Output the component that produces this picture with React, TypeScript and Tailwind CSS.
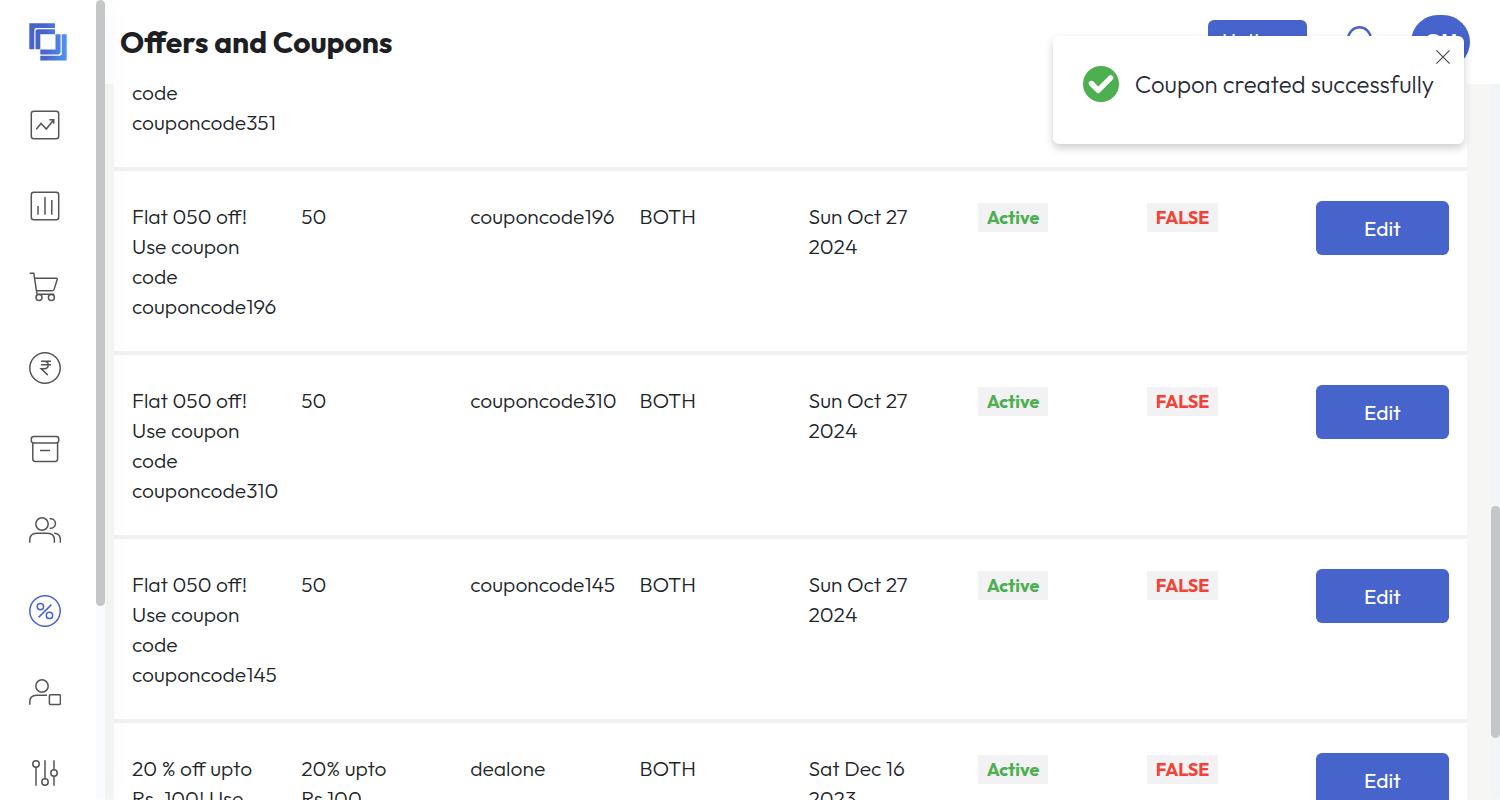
import type { ReactNode } from "react";

type Coupon = {
  title: string;
  discount: string;
  code: string;
  kind: string;
  expiry: string;
};

const flat = (n: string): Coupon => ({
  title: `Flat 050 off! Use coupon code couponcode${n}`,
  discount: "50",
  code: `couponcode${n}`,
  kind: "BOTH",
  expiry: "Sun Oct 27 2024",
});

const coupons: Coupon[] = [
  flat("351"),
  flat("196"),
  flat("310"),
  flat("145"),
  {
    title: "20 % off upto Rs. 100! Use coupon code dealone",
    discount: "20% upto Rs.100",
    code: "dealone",
    kind: "BOTH",
    expiry: "Sat Dec 16 2023",
  },
];

const navItems: { label: string; active?: boolean; icon: ReactNode }[] = [
  {
    label: "Dashboard",
    icon: (
      <>
        <rect x="2.3" y="2.3" width="27.4" height="27.4" rx="2.5" />
        <path d="M7.3 20.3 12 14.5l5.3 5.5 7.2-9M20.3 10.7h4.4v4" />
      </>
    ),
  },
  {
    label: "Reports",
    icon: (
      <>
        <rect x="2.3" y="2.3" width="27.4" height="27.4" rx="2.5" />
        <path d="M9 16v8.7M16 7v17.7M22.8 10v14.7" />
      </>
    ),
  },
  {
    label: "Orders",
    icon: (
      <>
        <path d="M.7 2.3h4.1L8 23.3h17.3M5.7 7.3h21.6q1.3 0 .9 1.2l-3 9.6q-.5 1.6-2 1.6H7.4" />
        <circle cx="10" cy="26.5" r="3" />
        <circle cx="22.4" cy="26.5" r="3" />
      </>
    ),
  },
  {
    label: "Payments",
    icon: (
      <>
        <circle cx="16" cy="16" r="15.2" />
        <path d="M12 9.2h10M12 12.8h10M12 9.2h3.2q4 0 4 3.7t-4 3.8h-3l6.6 6.4" />
      </>
    ),
  },
  {
    label: "Inventory",
    icon: (
      <>
        <rect x="2.3" y="3.6" width="27.4" height="6.4" rx="2.4" />
        <path d="M3.8 10v16q0 2.4 2.4 2.4h20q2.4 0 2.4-2.4V10M11 17.4h10" />
      </>
    ),
  },
  {
    label: "Customers",
    icon: (
      <>
        <circle cx="13" cy="10" r="6.2" />
        <path d="M.8 28.7V26q0-6.8 6.8-6.8h11q6.8 0 6.8 6.8v2.7M20.7 4.8a4.8 4.8 0 1 1 0 9.4M25.2 19.2q6.2.2 6.2 6.8v2.7" />
      </>
    ),
  },
  {
    label: "Offers",
    active: true,
    icon: (
      <>
        <circle cx="16" cy="16" r="15.2" />
        <circle cx="11.4" cy="11.6" r="3.2" />
        <circle cx="20.5" cy="20.4" r="3.2" />
        <path d="M9.6 22.4 22.4 9.6" />
      </>
    ),
  },
  {
    label: "Staff",
    icon: (
      <>
        <circle cx="13" cy="10" r="6.2" />
        <path d="M.8 28.7V26q0-6.8 6.8-6.8H18" />
        <rect x="20.4" y="18.8" width="11" height="9.6" rx="1" />
      </>
    ),
  },
  {
    label: "Settings",
    icon: (
      <>
        <circle cx="7" cy="7" r="3.2" />
        <circle cx="16" cy="25" r="3.2" />
        <circle cx="25" cy="16" r="3.2" />
        <path d="M7 10.2v18.5M16 3.3v18.5M25 3.3v9.5M25 19.2v9.5" />
      </>
    ),
  },
];

function Logo() {
  return (
    <svg viewBox="0 0 40 40" className="size-10" aria-hidden="true">
      <defs>
        <linearGradient id="logo" x1="0" y1="0" x2="1" y2="0">
          <stop offset="0.4" stopColor="#4763cc" />
          <stop offset="1" stopColor="#5093f2" />
        </linearGradient>
      </defs>
      <path
        fill="url(#logo)"
        d="M1.3 1.3H27V6H8.5Q6.3 6 6.3 8.2V27.3h-5ZM27 7.2H9.5Q7.5 7.2 7.5 9.2V27.3h4.8v-15H27ZM27.5 12.3h5.1V30q0 2.4-2.4 2.4H12.3v-4.9h15.2ZM33.8 12.3h4.9v26.3H12.3v-4.9h19.3q2.2 0 2.2-2.2Z"
      />
    </svg>
  );
}

function Sidebar() {
  return (
    <aside className="relative z-10 flex shrink-0 overflow-hidden bg-white shadow-[0_0_30px_rgba(0,0,0,0.04)]">
      <div className="flex w-24 flex-col">
        <a href="#home" aria-label="Home" className="flex h-[84px] shrink-0 items-center justify-center">
          <Logo />
        </a>
        <nav className="flex flex-col">
          {navItems.map((item) => (
            <a
              key={item.label}
              href={`#${item.label.toLowerCase()}`}
              aria-label={item.label}
              className={`flex h-[81px] shrink-0 items-center pl-[29px] ${item.active ? "text-[#4763cc]" : "text-[#555555]"}`}
            >
              <svg
                viewBox="0 0 32 32"
                className="size-8"
                fill="none"
                stroke="currentColor"
                strokeWidth="1.5"
                aria-hidden="true"
              >
                {item.icon}
              </svg>
            </a>
          ))}
        </nav>
      </div>
      <div className="w-[9px] rounded-full bg-[#fafbff]">
        <div className="h-[606px] rounded-full bg-[#c5c6c8]" />
      </div>
    </aside>
  );
}

function Header() {
  return (
    <header className="flex h-[84px] shrink-0 items-center justify-between bg-white pr-[30px] pl-[15px]">
      <h1 className="text-[30px] leading-10 font-bold text-[#1d1f24]">Offers and Coupons</h1>
      <div className="flex items-center">
        <button type="button" className="mr-10 h-11 w-[99px] rounded-md bg-[#4763cc] pb-0.5 text-[20px] text-white">
          Hotkeys
        </button>
        <button type="button" aria-label="Search" className="mr-8 text-[#4763cc]">
          <svg viewBox="0 0 32 32" className="size-8" fill="none" stroke="currentColor" strokeWidth="2.4" aria-hidden="true">
            <circle cx="12.5" cy="12.5" r="11.2" />
            <path d="m21 21 8.5 8.5" />
          </svg>
        </button>
        <button type="button" className="h-[54px] w-[59px] rounded-full bg-[#4763cc] text-[22px] font-bold text-white">
          GU
        </button>
      </div>
    </header>
  );
}

const cell = "border-t-4 border-[#f1f1f4] px-[18px] py-[30px] align-top";

function Badge({ tone, children }: { tone: string; children: ReactNode }) {
  return (
    <span className={`mt-0.5 inline-block bg-[#f2f2f4] px-[9px] text-[18px] leading-[29px] font-bold ${tone}`}>
      {children}
    </span>
  );
}

function CouponTable() {
  return (
    <table className="-mt-[101px] w-full table-fixed border-separate border-spacing-0 bg-white text-[21px] leading-[30px] font-light text-[#212529]">
      <tbody>
        {coupons.map((c) => (
          <tr key={c.code}>
            <td className={cell}>{c.title}</td>
            <td className={cell}>{c.discount}</td>
            <td className={cell}>{c.code}</td>
            <td className={cell}>{c.kind}</td>
            <td className={cell}>{c.expiry}</td>
            <td className={cell}>
              <Badge tone="text-[#4caf50]">Active</Badge>
            </td>
            <td className={cell}>
              <Badge tone="text-[#f44336]">FALSE</Badge>
            </td>
            <td className={cell}>
              <button type="button" className="block h-[54px] w-full rounded-md bg-[#4763cc] text-[21px] font-normal text-white">
                Edit
              </button>
            </td>
          </tr>
        ))}
      </tbody>
    </table>
  );
}

function Toast() {
  return (
    <div
      role="status"
      className="absolute top-9 right-9 z-20 flex items-center gap-4 rounded-md bg-white px-[30px] pt-[30px] pb-[42px] shadow-[0_4px_8px_rgba(0,0,0,0.2)]"
    >
      <svg viewBox="0 0 36 36" className="size-9 shrink-0" aria-hidden="true">
        <circle cx="18" cy="18" r="18" fill="#4caf50" />
        <path
          d="m8.4 17.5 6.8 6.8 12.4-12.4"
          fill="none"
          stroke="#fff"
          strokeWidth="5.4"
          strokeLinecap="round"
          strokeLinejoin="round"
        />
      </svg>
      <p className="text-[24px] leading-9 font-light whitespace-nowrap text-[#272b35]">Coupon created successfully</p>
      <button type="button" aria-label="Close" className="absolute top-3.5 right-3.5 text-[#444]">
        <svg viewBox="0 0 14 14" className="size-3.5" fill="none" stroke="currentColor" strokeWidth="1.1" aria-hidden="true">
          <path d="m.4.4 13.2 13.2M13.6.4.4 13.6" />
        </svg>
      </button>
    </div>
  );
}

export default function App() {
  return (
    <div className="relative flex h-screen overflow-hidden bg-[#f6f6f4] font-[Outfit,Lato,sans-serif]">
      <Sidebar />
      <div className="flex min-w-0 flex-1 flex-col">
        <Header />
        <main className="flex min-h-0 flex-1">
          <div className="min-w-0 flex-1 overflow-hidden pr-6 pl-[9px]">
            <CouponTable />
          </div>
          <div className="w-[9px] rounded-b-full bg-[#f3f4f8] pt-[422px]">
            <div className="h-[232px] rounded-full bg-[#c5c6c8]" />
          </div>
        </main>
      </div>
      <Toast />
    </div>
  );
}
